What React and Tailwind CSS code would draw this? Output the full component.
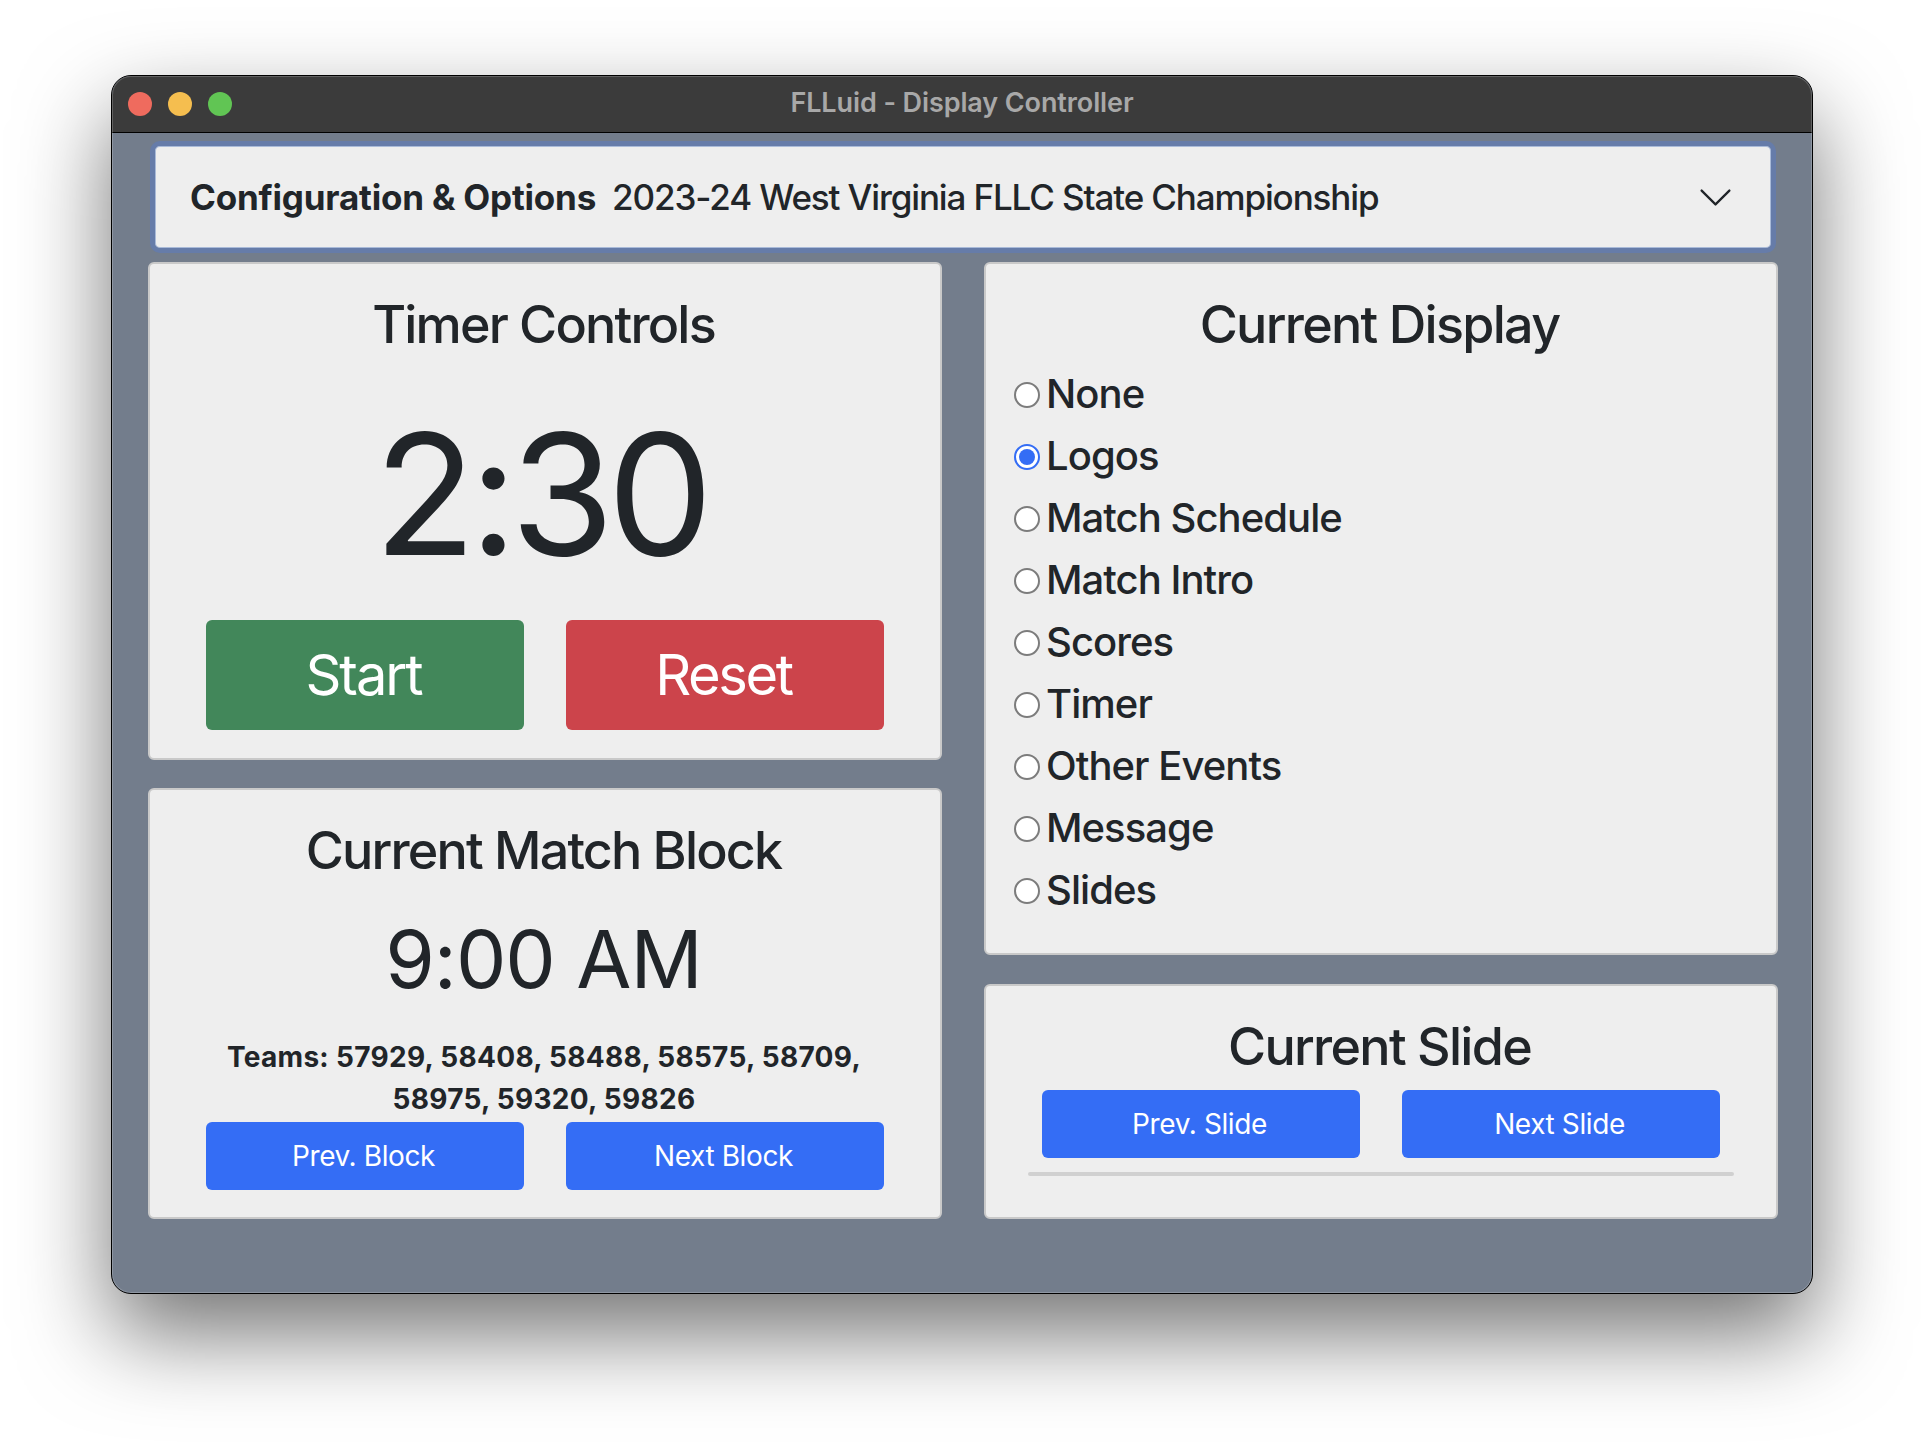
import React from 'react';

const font = { fontFamily: 'Inter, sans-serif' };

const displayOptions = ['None', 'Logos', 'Match Schedule', 'Match Intro', 'Scores', 'Timer', 'Other Events', 'Message', 'Slides'];

function Card({ className, children }) {
  return (
    <div className={`rounded-[6px] border-2 border-[#c9c9c9] bg-[#eeeeee] ${className}`}>
      {children}
    </div>
  );
}

function Btn({ className, children }) {
  return (
    <button className={`flex w-[318px] items-center justify-center rounded-[6px] pr-[3px] text-white ${className}`}>
      {children}
    </button>
  );
}

function Radio({ label, checked }) {
  return (
    <div className="flex h-[62px] items-center">
      {checked ? (
        <span className="flex size-[26px] items-center justify-center rounded-full border-2 border-[#346df5] bg-white">
          <span className="size-[16px] rounded-full bg-[#346df5]" />
        </span>
      ) : (
        <span className="size-[26px] rounded-full border-2 border-[#7c7c7c] bg-white" />
      )}
      <span className="ml-[6px] -translate-y-[1px] text-[40px] leading-[48px] font-[450] tracking-[-0.95px] text-[#212529]">{label}</span>
    </div>
  );
}

export default function App() {
  return (
    <div className="h-[1442px] w-[1924px] overflow-hidden bg-white pl-[111px] pt-[75px] text-[#212529]" style={font}>
      <div className="relative h-[1219px] w-[1702px] overflow-hidden rounded-[20px] border border-black bg-[#737d8c] shadow-[0_40px_90px_rgba(0,0,0,0.55)] after:pointer-events-none after:absolute after:inset-0 after:rounded-[19px] after:shadow-[inset_0_0_0_1px_rgba(255,255,255,0.2)]">
        <div className="grid h-[57px] grid-cols-[1fr_auto_1fr] items-center border-b border-black bg-[#3b3b3b] px-[16px] pb-[2px]">
          <div className="flex translate-y-[1px] gap-[16px]">
            <span className="size-[24px] rounded-full bg-[#ef6b5e]" />
            <span className="size-[24px] rounded-full bg-[#f5be4f]" />
            <span className="size-[24px] rounded-full bg-[#61c554]" />
          </div>
          <div className="text-[27px] font-semibold tracking-[-0.1px] text-[#a8a8a8]">FLLuid - Display Controller</div>
          <div />
        </div>

        <div className="pl-[36px] pr-[33px] pt-[8px]">
          <div className="ml-[2px] mr-[3px] flex h-[112px] items-center rounded-[10px] border-[5px] border-[#667ca9] bg-[#eeeeee] pl-[35px] pr-[37px] shadow-[inset_0_0_0_1px_#a9bad8]">
            <span className="text-[35px] font-[650] tracking-[-0.2px]">Configuration &amp; Options</span>
            <span className="ml-[16px] text-[35px] font-[450] tracking-[-1.13px]">2023-24 West Virginia FLLC State Championship</span>
            <svg className="ml-auto size-[37px]" viewBox="0 0 16 16" fill="#212529">
              <path fillRule="evenodd" d="M1.646 4.646a.5.5 0 0 1 .708 0L8 10.293l5.646-5.647a.5.5 0 0 1 .708.708l-6 6a.5.5 0 0 1-.708 0l-6-6a.5.5 0 0 1 0-.708z" />
            </svg>
          </div>

          <div className="mt-[9px] grid grid-cols-[794px_794px] gap-x-[42px]">
            <div className="flex flex-col gap-[28px]">
              <Card className="h-[498px] text-center">
                <h2 className="mt-[30px] pr-[3px] text-[52px] leading-[62px] font-medium tracking-[-1.8px]">Timer Controls</h2>
                <div className="mt-[38px] pr-[10px] text-[168px] leading-[200px] tracking-[-7px]">2:30</div>
                <div className="mt-[26px] flex justify-between px-[56px]">
                  <Btn className="h-[110px] bg-[#42875a] text-[56px] tracking-[-2px]">Start</Btn>
                  <Btn className="h-[110px] bg-[#cc444b] text-[56px] tracking-[-2.4px]">Reset</Btn>
                </div>
              </Card>
              <Card className="h-[431px] text-center">
                <h2 className="mt-[30px] pr-[3px] text-[52px] leading-[62px] font-medium tracking-[-1.8px]">Current Match Block</h2>
                <div className="mt-[27px] pr-[3px] text-[80px] leading-[100px] tracking-[-1px]">9:00 AM</div>
                <div className="mt-[27px] pl-[40px] pr-[42px] text-[28px] leading-[42px] font-bold tracking-[0.3px]">
                  Teams: 57929, 58408, 58488, 58575, 58709, 58975, 59320, 59826
                </div>
                <div className="mt-[2px] flex justify-between px-[56px]">
                  <Btn className="h-[68px] bg-[#346df5] text-[28px] tracking-[-0.4px]">Prev. Block</Btn>
                  <Btn className="h-[68px] bg-[#346df5] text-[28px] tracking-[-0.4px]">Next Block</Btn>
                </div>
              </Card>
            </div>

            <div className="flex flex-col gap-[29px]">
              <Card className="h-[693px] px-[28px]">
                <h2 className="mt-[30px] pr-[3px] text-center text-[52px] leading-[62px] font-medium tracking-[-1.7px]">Current Display</h2>
                <div className="mt-[8px] flex flex-col">
                  {displayOptions.map((o) => (
                    <Radio key={o} label={o} checked={o === 'Logos'} />
                  ))}
                </div>
              </Card>
              <Card className="h-[235px] text-center">
                <h2 className="mt-[30px] pr-[3px] text-[52px] leading-[62px] font-medium tracking-[-1.7px]">Current Slide</h2>
                <div className="mt-[12px] flex justify-between px-[56px]">
                  <Btn className="h-[68px] bg-[#346df5] text-[28px] tracking-[-0.4px]">Prev. Slide</Btn>
                  <Btn className="h-[68px] bg-[#346df5] text-[28px] tracking-[-0.4px]">Next Slide</Btn>
                </div>
                <div className="mx-[42px] mt-[14px] h-[4px] rounded-full bg-[#d0d0d0]" />
              </Card>
            </div>
          </div>
        </div>
      </div>
    </div>
  );
}
